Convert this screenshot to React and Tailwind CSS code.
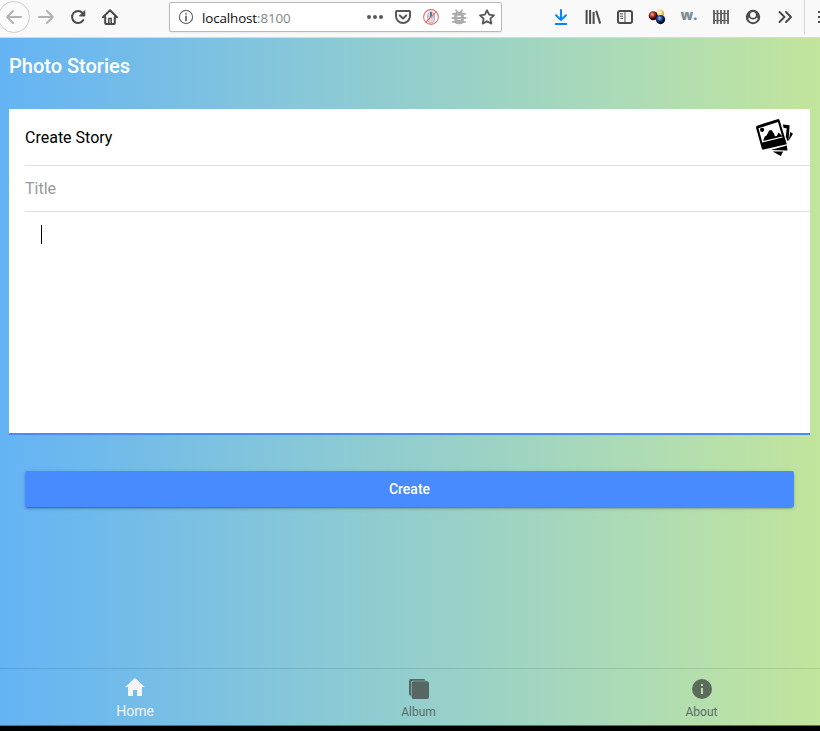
import React from "react";

const Icon = ({ children, color = "#4a4a4c", size = 16, className = "" }) => (
  <svg
    width={size}
    height={size}
    viewBox="0 0 16 16"
    fill="none"
    stroke={color}
    strokeWidth="2"
    strokeLinecap="round"
    strokeLinejoin="round"
    className={`shrink-0 ${className}`}
  >
    {children}
  </svg>
);

const Cell = ({ children }) => (
  <div className="flex h-[34px] w-8 shrink-0 items-center justify-center">{children}</div>
);

const SmallCell = ({ children }) => (
  <div className="flex h-full w-7 shrink-0 items-center justify-center">{children}</div>
);

function Browser() {
  return (
    <div className="flex h-[38px] items-start overflow-hidden border-b border-[#d9d9da] bg-[#f9f9fa]">
      <div className="-ml-0.5 flex shrink-0">
        <Cell>
          <div className="flex size-8 shrink-0 items-center justify-center rounded-full border border-[#cfcfd0] bg-[#fbfbfb]">
            <Icon color="#b2b2b3"><path d="M15 8H1.5M7 2 1.2 8 7 14" /></Icon>
          </div>
        </Cell>
        <Cell><Icon color="#b2b2b3"><path d="M1 8h13.5M9 2l5.8 6L9 14" /></Icon></Cell>
        <Cell>
          <Icon>
            <path d="M13.3 11A6 6 0 1 1 12.6 4" />
            <path d="M14.8 2v5H9.8z" fill="#4a4a4c" strokeWidth="1" />
          </Icon>
        </Cell>
        <Cell>
          <Icon>
            <path d="M1 8.2 8 1.2l7 7M3.2 8v6.2q0 .8.8.8h8q.8 0 .8-.8V8" />
            <path d="M6.8 14.5V9.6h2.4v4.9" strokeWidth="1.5" />
          </Icon>
        </Cell>
      </div>
      <div className="ml-[43px] mt-0.5 flex h-[30px] w-[333px] shrink-0 items-center rounded-[2px] border border-[#b9b9ba] bg-white pl-2 shadow-[0_1px_2px_rgba(0,0,0,0.06)]">
        <Icon color="#6b6b6c">
          <circle cx="8" cy="8" r="6.6" strokeWidth="1.2" />
          <path d="M8 7.4v4M8 4.7v.1" strokeWidth="1.8" />
        </Icon>
        <div className="ml-2 w-[159px] whitespace-nowrap pt-0.5 font-['Open_Sans',sans-serif] text-[13.4px] tracking-[-0.12px] text-[#0c0c0d]">
          localhost<span className="text-[#858586]">:8100</span>
        </div>
        <SmallCell>
          <Icon color="none">
            <g fill="#58585a"><circle cx="2" cy="8" r="2" /><circle cx="8" cy="8" r="2" /><circle cx="14" cy="8" r="2" /></g>
          </Icon>
        </SmallCell>
        <SmallCell>
          <Icon color="#58585a">
            <path d="M1.8 2h12.4q.8 0 .8.8V7A7 7 0 0 1 1 7V2.8Q1 2 1.8 2z" />
            <path d="m4.8 6.4 3.2 3 3.2-3" />
          </Icon>
        </SmallCell>
        <SmallCell>
          <Icon color="#a9b4be">
            <path d="M4.5 7q0-4 3.5-4t3.5 4v3q0 4-3.5 4t-3.5-4z" fill="#d9dde1" strokeWidth="1" />
            <path d="M4.5 8h7" strokeWidth="1" />
            <path d="M8 3.8v3.5" stroke="#527796" strokeWidth="2" />
            <circle cx="8" cy="8" r="7.4" stroke="#ef6a68" strokeWidth="1.1" />
            <path d="M2.8 13.2 13.2 2.8" stroke="#ef6a68" strokeWidth="1.2" />
          </Icon>
        </SmallCell>
        <SmallCell>
          <Icon color="#acacad">
            <path d="M5 1.3l1.5 2M11 1.3l-1.5 2M1.8 4.8h12.4M1.3 9h13.4M1.8 12.8h12.4" strokeWidth="1.8" />
            <rect x="4" y="3.5" width="8" height="11" rx="3" fill="#acacad" strokeWidth="1.6" />
            <path d="M6 7.3h4M6 10.5h4" stroke="#fff" strokeWidth="1.2" strokeLinecap="butt" />
          </Icon>
        </SmallCell>
        <SmallCell>
          <Icon color="#58585a">
            <path d="m8 1.2 2.1 4.5 4.9.6-3.6 3.4.9 4.9L8 12.2l-4.3 2.4.9-4.9L1 6.3l4.9-.6z" strokeWidth="1.8" />
          </Icon>
        </SmallCell>
      </div>
      <div className="ml-[43px] flex shrink-0">
        <Cell>
          <Icon color="#0a84ff"><path d="M8 1v9.5M3 6.3 8 11l5-4.7M2.7 15h10.6" /></Icon>
        </Cell>
        <Cell>
          <Icon>
            <path d="M1.6 1v14M5.1 1v14M8.6 3v12M11.2 1.8 15.2 14.6" strokeLinecap="butt" />
          </Icon>
        </Cell>
        <Cell>
          <Icon>
            <rect x="1" y="2" width="14" height="12" rx="2" />
            <path d="M8 2v12M3.2 4.9h2.5M3.2 7.2h2.5M3.9 9.5h1.8" strokeWidth="1" />
          </Icon>
        </Cell>
        <Cell>
          <svg width="18" height="18" viewBox="0 0 18 18" className="shrink-0">
            <defs>
              <radialGradient id="yellow" cx=".4" cy=".35"><stop stopColor="#fffbe0" /><stop offset=".6" stopColor="#f8dd87" /><stop offset="1" stopColor="#d3b055" /></radialGradient>
              <radialGradient id="red" cx=".4" cy=".35"><stop stopColor="#ffb8a0" /><stop offset=".5" stopColor="#b53a28" /><stop offset="1" stopColor="#260403" /></radialGradient>
              <radialGradient id="blue" cx=".4" cy=".35"><stop stopColor="#a5c2ff" /><stop offset=".5" stopColor="#274f9f" /><stop offset="1" stopColor="#030b20" /></radialGradient>
            </defs>
            <circle cx="12" cy="5.8" r="4.2" fill="url(#yellow)" />
            <circle cx="5.2" cy="7.8" r="4.5" fill="url(#red)" />
            <circle cx="12.5" cy="11.6" r="4.6" fill="url(#blue)" />
          </svg>
        </Cell>
        <Cell>
          <span className="pb-1.5 font-['Open_Sans',sans-serif] text-[14px] font-extrabold text-[#7b8d98]">w.</span>
        </Cell>
        <Cell>
          <Icon color="#626263">
            <path d="M1 1v14M4.5 1v14M8 1v14M11.5 1v14M15 1v14" strokeWidth="1.9" strokeLinecap="butt" />
            <path d="M0 4.5h16M0 11.5h16" strokeWidth="1" strokeLinecap="butt" />
          </Icon>
        </Cell>
        <Cell>
          <Icon color="none">
            <circle cx="8" cy="8" r="7.2" fill="#4a4a4c" />
            <path d="M3.2 8.8h9.6A4.8 4.4 0 0 1 3.2 8.8z" fill="#f9f9fa" />
            <circle cx="8" cy="6.2" r="4.2" fill="#4a4a4c" />
            <circle cx="8" cy="5.9" r="2.9" fill="#f9f9fa" />
          </Icon>
        </Cell>
        <Cell><Icon><path d="m2.5 3 5 5-5 5M9 3l5 5-5 5" /></Icon></Cell>
      </div>
      <div className="ml-[3px] h-[34px] w-px shrink-0 bg-[#d5d5d6]" />
      <div className="ml-[13px] mt-[11px] flex shrink-0 flex-col gap-[3px]">
        <div className="h-0.5 w-4 bg-[#4a4a4c]" />
        <div className="h-0.5 w-4 bg-[#4a4a4c]" />
        <div className="h-0.5 w-4 bg-[#4a4a4c]" />
      </div>
    </div>
  );
}

const PhotosIcon = () => (
  <svg width="38" height="38" viewBox="0 0 38 38">
    <path d="m27.8 6.6 6.8.6-1 15-1.2.8-1.6-4.6.9-8.2-3-.3zM35.3 14l2.7 1.8-4.3 7z" />
    <path d="m15.8 32 16-4.5.7 5zM17.6 33.4h10.6l-2.4 4.6z" />
    <path
      d="M2.6 7.4 22.5 1.2q1.6-.4 2.1 1.1l7.2 24L8.5 31.6Q7.2 31.9 6.8 30.6L1.1 10q-.4-1.9 1.5-2.6zm.9 2.9 3.8 14.2 20.2-5.1L23 3.9z"
      fillRule="evenodd"
    />
    <circle cx="7.1" cy="11.8" r="2.1" />
    <path d="m8.1 23 1.7-4.4 1.8-1.2 2.6-5 2.2-.4 2.4 3.2 1.3 3 1.6-.3 1.9-3.3 3.1 3 .6 1z" />
  </svg>
);

const Tab = ({ icon, label, active }) => (
  <div
    className={
      active
        ? "flex w-[284px] shrink-0 flex-col items-center pt-[7px] text-[14px] text-[#f4f4f4]"
        : "flex w-[283px] shrink-0 flex-col items-center pt-[9px] text-[12px] text-[#5d6a67]"
    }
  >
    {icon}
    <span className={active ? "mt-[3px] leading-5" : "mt-0.5 leading-5"}>{label}</span>
  </div>
);

export default function App() {
  return (
    <div className="flex h-[731px] w-[820px] flex-col overflow-hidden bg-black font-['Roboto',sans-serif]">
      <Browser />
      <div className="flex h-[688px] flex-col overflow-hidden border-b border-[#1b7fcb] bg-linear-to-r from-[#64b3f4] to-[#c2e59c]">
        <header className="flex h-14 items-center pl-[9px] text-[20px] font-medium text-white">
          Photo Stories
        </header>
        <main className="flex-1 pt-[15px]">
          <section className="ml-[9px] h-[326px] w-[801px] border-b-2 border-[#488aff] bg-white pl-4">
            <div className="flex h-[57px] items-center justify-between border-b border-[#dedede] pr-[17px] text-[16px] text-black">
              <span className="pt-0.5">Create Story</span>
              <PhotosIcon />
            </div>
            <div className="flex h-[46px] items-center border-b border-[#dedede] text-[16px] text-[#999]">
              Title
            </div>
            <div className="ml-4 mt-[13px] h-[19px] w-px bg-black" />
          </section>
          <button className="ml-[25px] mt-9 block h-9 w-[769px] rounded-[2px] bg-[#488aff] text-[14px] font-medium text-white shadow-[0_2px_2px_0_rgba(0,0,0,0.14),0_3px_1px_-2px_rgba(0,0,0,0.2),0_1px_5px_0_rgba(0,0,0,0.12)]">
            Create
          </button>
        </main>
        <div className="h-px bg-black/10" />
        <nav className="-ml-[7px] flex h-14">
          <Tab
            active
            label="Home"
            icon={
              <svg width="22" height="22" viewBox="0 0 22 22" fill="#f4f4f4">
                <path d="M11 2 1.2 11H4v9h5v-6h4v6h5v-9h2.8z" />
              </svg>
            }
          />
          <Tab
            label="Album"
            icon={
              <svg width="22" height="22" viewBox="0 0 22 22" fill="#566764">
                <path d="M1 16V3q0-2 2-2h12.5q1.8 0 2.2 1.7H5Q3 2.7 3 4.7v13Q1 17.6 1 16z" />
                <rect x="3.6" y="3.3" width="17.4" height="17.7" rx="2" />
              </svg>
            }
          />
          <Tab
            label="About"
            icon={
              <svg width="22" height="22" viewBox="0 0 22 22" fill="#5d6b5d">
                <circle cx="11" cy="11" r="10" />
                <path d="M10 6h2v2h-2zM10 10h2v6h-2z" fill="#b7deab" />
              </svg>
            }
          />
        </nav>
      </div>
    </div>
  );
}
